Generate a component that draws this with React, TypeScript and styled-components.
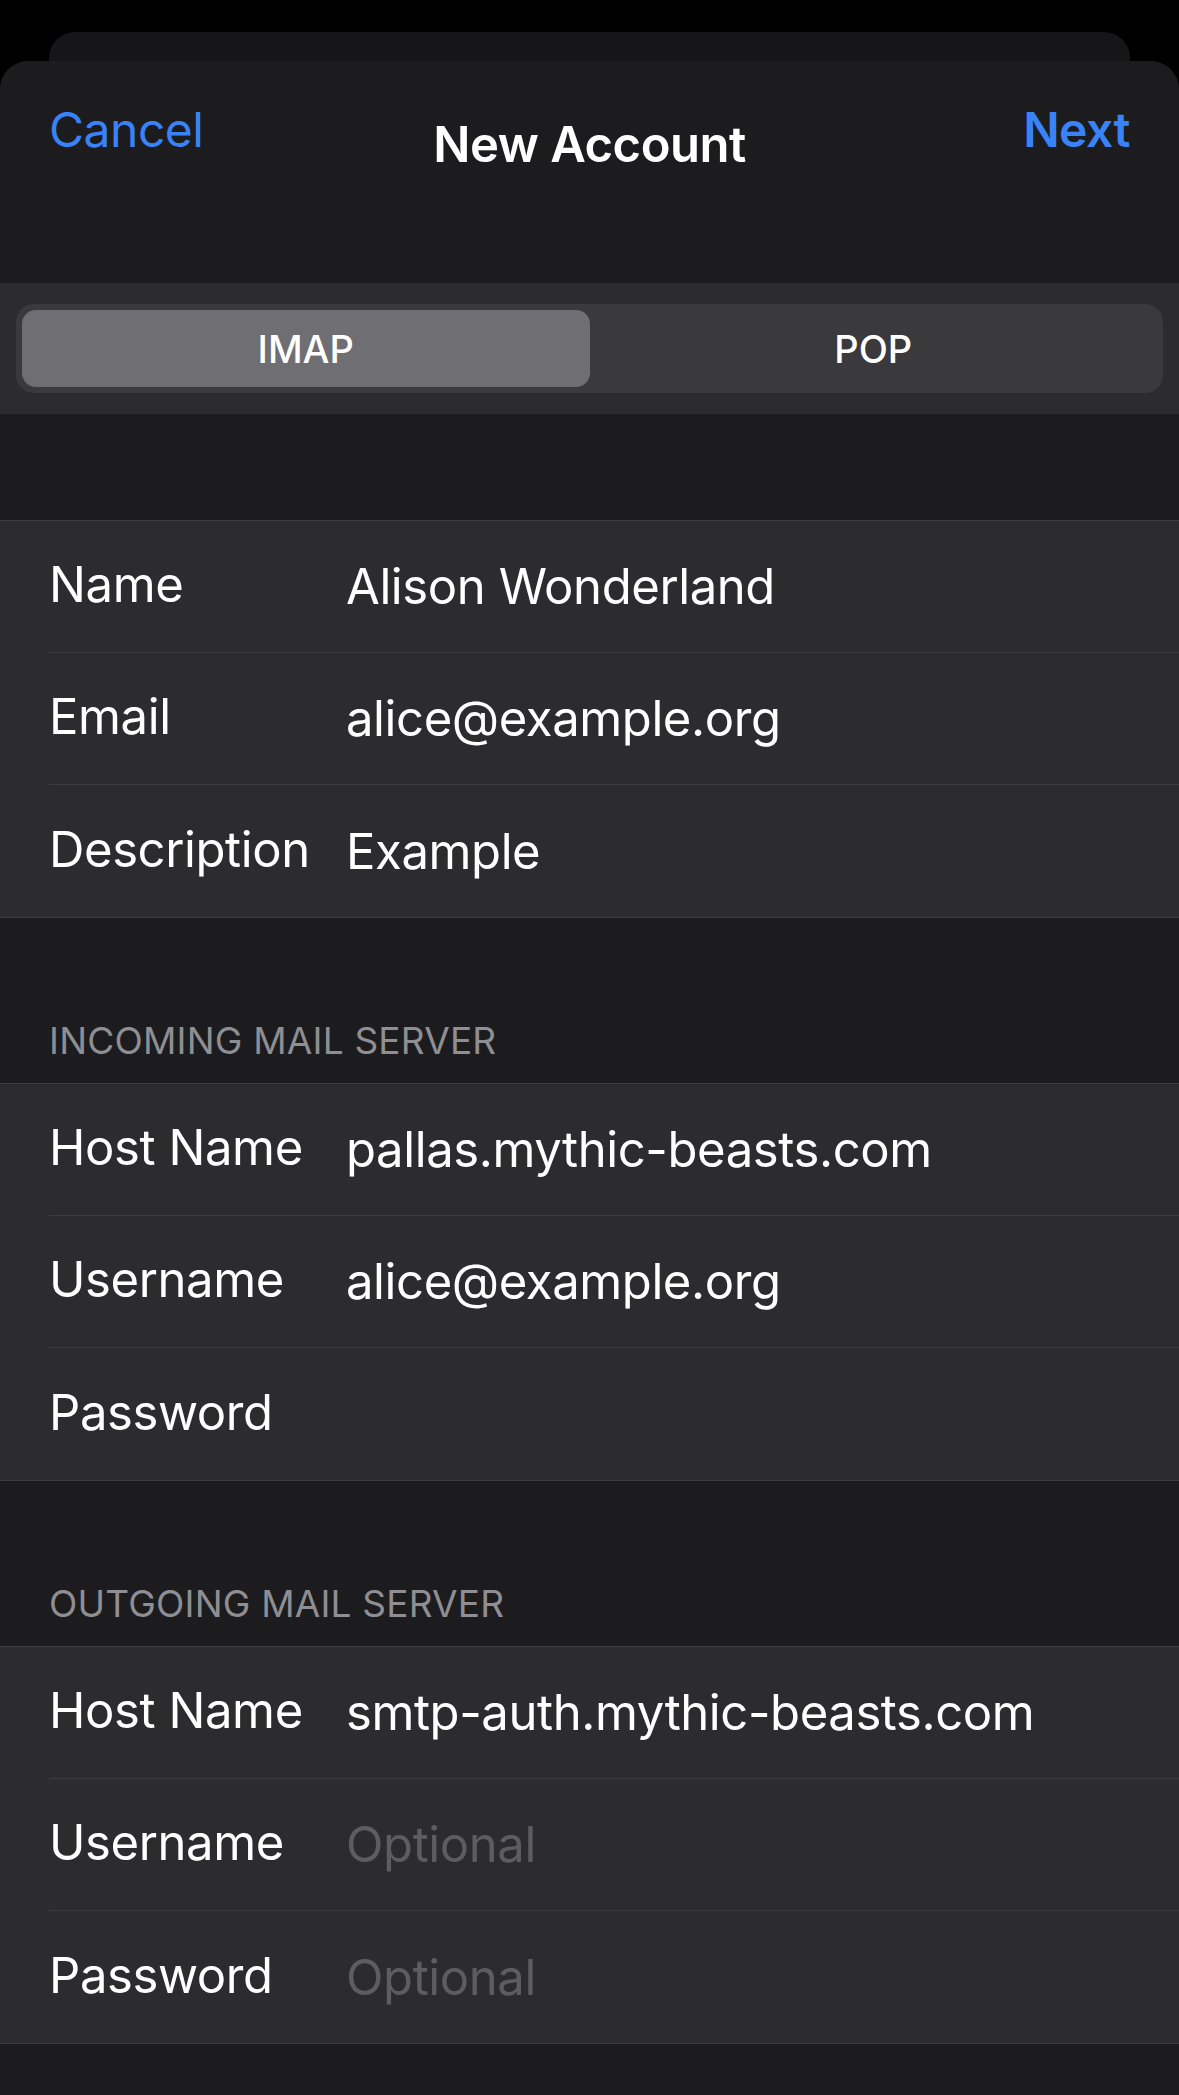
import React from "react";
import styled, { createGlobalStyle } from "styled-components";

const Global = createGlobalStyle`
  html, body { margin: 0; background: #000; }
  body { font-family: Inter, "Noto Sans", "Liberation Sans", sans-serif; -webkit-font-smoothing: antialiased; }
`;

type Field = { label: string; value?: string; placeholder?: string };

const account: Field[] = [
  { label: "Name", value: "Alison Wonderland" },
  { label: "Email", value: "alice@example.org" },
  { label: "Description", value: "Example" },
];

const incoming: Field[] = [
  { label: "Host Name", value: "pallas.mythic-beasts.com" },
  { label: "Username", value: "alice@example.org" },
  { label: "Password" },
];

const outgoing: Field[] = [
  { label: "Host Name", value: "smtp-auth.mythic-beasts.com" },
  { label: "Username", placeholder: "Optional" },
  { label: "Password", placeholder: "Optional" },
];

const Group: React.FC<{ fields: Field[] }> = ({ fields }) => (
  <Table>
    {fields.map((f, i) => (
      <Row key={i} $last={i === fields.length - 1}>
        <Label>{f.label}</Label>
        <Value $placeholder={!f.value}>{f.value ?? f.placeholder ?? ""}</Value>
      </Row>
    ))}
  </Table>
);

const App: React.FC = () => (
  <Screen>
    <Global />
    <BackCard />
    <Sheet>
      <NavBar>
        <NavButton>Cancel</NavButton>
        <Title>New Account</Title>
        <NavButton $bold>Next</NavButton>
      </NavBar>
      <SegmentBand>
        <Segmented>
          <Segment $active>IMAP</Segment>
          <Segment>POP</Segment>
        </Segmented>
      </SegmentBand>
      <Spacer />
      <Group fields={account} />
      <SectionHeader>INCOMING MAIL SERVER</SectionHeader>
      <Group fields={incoming} />
      <SectionHeader>OUTGOING MAIL SERVER</SectionHeader>
      <Group fields={outgoing} />
    </Sheet>
  </Screen>
);

const Screen = styled.div`
  width: 1179px;
  height: 2095px;
  background: #000;
  padding-top: 32px;
  box-sizing: border-box;
  overflow: hidden;
`;

const BackCard = styled.div`
  margin: 0 49px;
  height: 60px;
  margin-bottom: -31px;
  background: #161618;
  border-radius: 26px 26px 0 0;
`;

const Sheet = styled.div`
  position: relative;
  background: #1c1c1e;
  border-radius: 28px 28px 0 0;
  height: 2034px;
`;

const NavBar = styled.div`
  position: relative;
  display: flex;
  align-items: center;
  justify-content: space-between;
  padding: 0 49px 85px;
  box-sizing: border-box;
  height: 222px;
`;

const NavButton = styled.div<{ $bold?: boolean }>`
  color: #3a82f7;
  font-size: 48px;
  font-weight: ${(p) => (p.$bold ? 600 : 400)};
  letter-spacing: -0.5px;
`;

const Title = styled.div`
  position: absolute;
  left: 0;
  right: 0;
  top: 54px;
  text-align: center;
  color: #fff;
  font-size: 49px;
  font-weight: 600;
  letter-spacing: -0.5px;
  pointer-events: none;
`;

const SegmentBand = styled.div`
  background: #2c2c2e;
  padding: 21px 16px;
`;

const Segmented = styled.div`
  display: grid;
  grid-template-columns: 1fr 1fr;
  background: #3a3a3c;
  border-radius: 18px;
  padding: 6px;
  height: 89px;
  box-sizing: border-box;
`;

const Segment = styled.div<{ $active?: boolean }>`
  display: flex;
  align-items: center;
  justify-content: center;
  border-radius: 14px;
  background: ${(p) => (p.$active ? "#6e6e73" : "transparent")};
  color: #fff;
  font-size: 38px;
  font-weight: 500;
`;

const Spacer = styled.div`
  height: 106px;
`;

const Table = styled.div`
  background: #2c2c2e;
  border-top: 1px solid #3d3d41;
  border-bottom: 1px solid #3d3d41;
`;

const Row = styled.div<{ $last?: boolean }>`
  display: flex;
  align-items: center;
  margin-left: 49px;
  height: 132px;
  box-sizing: border-box;
  border-bottom: ${(p) => (p.$last ? "none" : "1px solid #3d3d41")};
`;

const Label = styled.div`
  width: 297px;
  flex-shrink: 0;
  color: #fff;
  font-size: 49px;
  letter-spacing: -0.4px;
  margin-top: -4px;
`;

const Value = styled.div<{ $placeholder?: boolean }>`
  color: ${(p) => (p.$placeholder ? "#5d5d61" : "#fff")};
  font-size: 49px;
  letter-spacing: -0.4px;
`;

const SectionHeader = styled.div`
  padding: 100px 49px 20px;
  color: #8e8e93;
  font-size: 37px;
  letter-spacing: 0.2px;
`;

export default App;
